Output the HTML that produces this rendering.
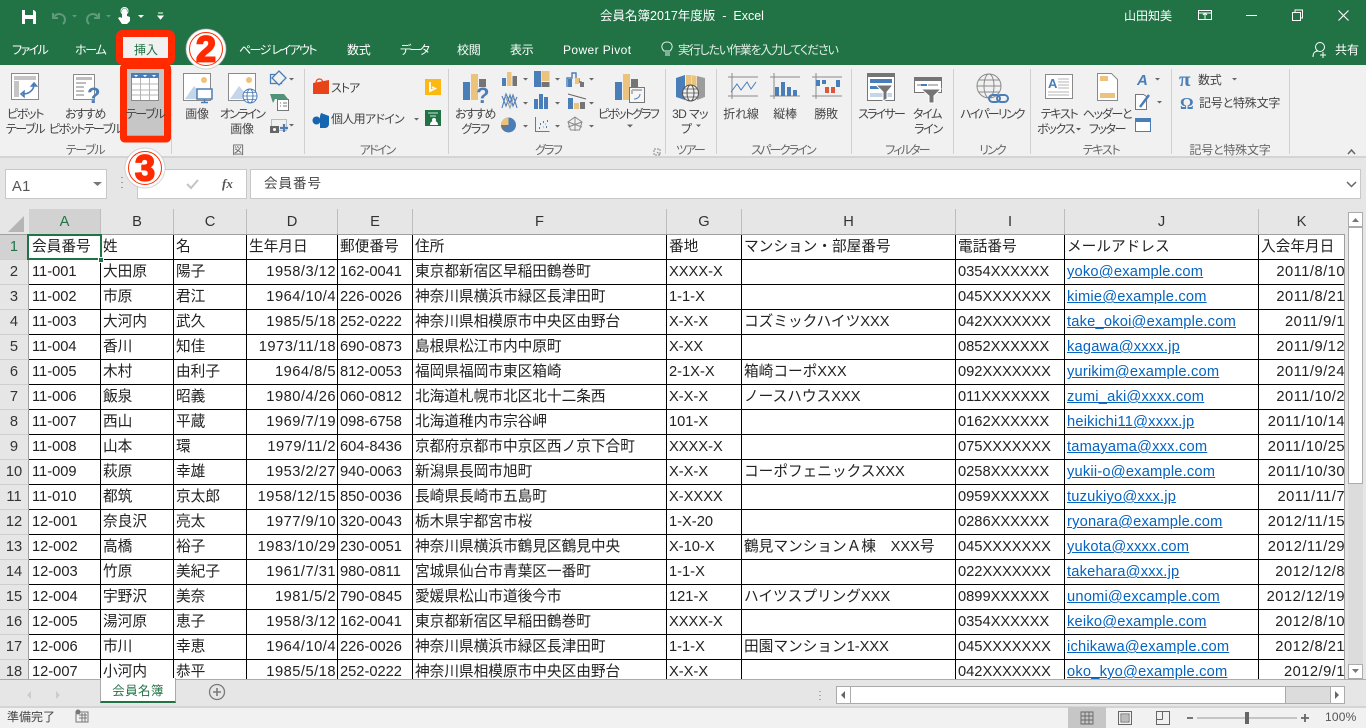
<!DOCTYPE html>
<html lang="ja"><head><meta charset="utf-8"><title>会員名簿2017年度版 - Excel</title>
<style>
*{box-sizing:border-box}
html,body{margin:0;padding:0;width:1366px;height:728px;overflow:hidden;background:#e6e6e6;font-family:"Liberation Sans","Noto Sans CJK JP",sans-serif}
.b{position:absolute}
.t{position:absolute;white-space:nowrap;font-size:12px;line-height:16px;color:#444;font-feature-settings:"palt";letter-spacing:-.2px}
.t.k{letter-spacing:-1.3px}
.t.k2{letter-spacing:-1.8px}
.c{transform:translateX(-50%);text-align:center}
.w{color:#fff}
.sep{position:absolute;top:69px;height:85px;width:1px;background:#d0d0d0}
.grp{color:#666;top:142px}
.ch{position:absolute;top:209px;height:25px;line-height:26px;text-align:center;font-size:14.67px;color:#333;border-right:1px solid #bdbdbd}
#sheet{position:absolute;left:0;top:235px;width:1344px;height:444px;overflow:hidden;background:#fff}
table{border-collapse:separate;border-spacing:0;table-layout:fixed;width:1347px}
td,th{height:25px;padding:1px 0 0 3px;border-right:1px solid #000;border-bottom:1px solid #000;font-size:14.67px;font-weight:normal;line-height:23px;overflow:hidden;white-space:nowrap;text-align:left;color:#222}
th{padding:1px 0 0 0;text-align:center;background:#e6e6e6;border-right:1px solid #9f9f9f;border-bottom:1px solid #cfcfcf;color:#333}
td.d{text-align:right;padding:1px 1px 0 0;letter-spacing:.5px}
td.m{color:#0563c1;text-decoration:underline;letter-spacing:.2px}
td.l{padding-left:2px}
tr{height:25px}
</style></head><body>
<div class="b" style="left:0;top:0;width:1366px;height:65px;background:#217346"></div>
<div class="b" style="left:0;top:65px;width:1366px;height:93px;background:#f1f1f1;border-bottom:2px solid #d4d4d4"></div>
<div class="b" style="left:5px;top:169px;width:102px;height:30px;background:#fff;border:1px solid #c8c8c8"></div>
<div class="b" style="left:137px;top:169px;width:110px;height:30px;background:#fff;border:1px solid #c8c8c8"></div>
<div class="b" style="left:250px;top:169px;width:1111px;height:30px;background:#fff;border:1px solid #c8c8c8"></div>

<div class="t w" style="left:600px;top:8px;font-size:12.5px;letter-spacing:0;font-feature-settings:normal">会員名簿2017年度版&nbsp; -&nbsp; Excel</div>
<div class="t w" style="left:1124px;top:8px;letter-spacing:0;font-feature-settings:normal">山田知美</div>
<div class="t w k" style="left:12px;top:42px;letter-spacing:-1.6px">ファイル</div>
<div class="t w k" style="left:75px;top:42px">ホーム</div>
<div class="t w k" style="left:239px;top:42px;letter-spacing:-1.6px">ページ レイアウト</div>
<div class="t w" style="left:347px;top:42px">数式</div>
<div class="t w k2" style="left:400px;top:42px">データ</div>
<div class="t w" style="left:457px;top:42px">校閲</div>
<div class="t w" style="left:510px;top:42px">表示</div>
<div class="t w" style="left:563px;top:42px;letter-spacing:.4px">Power Pivot</div>
<div class="t" style="left:678px;top:42px;color:#e4eee8;letter-spacing:-1.2px">実行したい作業を入力してください</div>
<div class="t w" style="left:1335px;top:42px;letter-spacing:0">共有</div>

<div class="t c k" style="left:25px;top:106px">ピボット</div><div class="t c k" style="left:25px;top:121px">テーブル</div>
<div class="t c k" style="left:85px;top:106px">おすすめ</div><div class="t c k" style="left:85px;top:121px;letter-spacing:-1.6px">ピボットテーブル</div>
<div class="t c" style="left:197px;top:106px">画像</div>
<div class="t c k2" style="left:242px;top:106px">オンライン</div><div class="t c" style="left:242px;top:121px">画像</div>
<div class="t" style="left:331px;top:80px;letter-spacing:-1px">ストア</div>
<div class="t" style="left:331px;top:111px;letter-spacing:-.7px">個人用アドイン</div>
<div class="t c k" style="left:475px;top:106px">おすすめ</div><div class="t c k" style="left:475px;top:121px">グラフ</div>
<div class="t c k2" style="left:628px;top:106px">ピボットグラフ</div>
<div class="t c" style="left:690px;top:106px;letter-spacing:-.6px">3D マッ</div><div class="t" style="left:681px;top:121px">プ</div>
<div class="t c" style="left:741px;top:106px">折れ線</div>
<div class="t c" style="left:785px;top:106px">縦棒</div>
<div class="t c" style="left:826px;top:106px">勝敗</div>
<div class="t c k2" style="left:881px;top:106px">スライサー</div>
<div class="t c k" style="left:927px;top:106px">タイム</div><div class="t c k" style="left:928px;top:121px">ライン</div>
<div class="t c k2" style="left:992px;top:106px">ハイパーリンク</div>
<div class="t c k" style="left:1059px;top:106px">テキスト</div><div class="t k" style="left:1037px;top:121px">ボックス</div>
<div class="t c k" style="left:1107px;top:106px">ヘッダーと</div><div class="t c k" style="left:1107px;top:121px">フッター</div>
<div class="t" style="left:1198px;top:72px">数式</div>
<div class="t" style="left:1199px;top:95px">記号と特殊文字</div>

<div class="t grp c k" style="left:85px">テーブル</div>
<div class="t grp c" style="left:238px">図</div>
<div class="t grp c k2" style="left:377px">アドイン</div>
<div class="t grp c k2" style="left:548px">グラフ</div>
<div class="t grp c k2" style="left:690px">ツアー</div>
<div class="t grp c k2" style="left:783px">スパークライン</div>
<div class="t grp c k2" style="left:907px">フィルター</div>
<div class="t grp c k2" style="left:992px">リンク</div>
<div class="t grp c k" style="left:1101px">テキスト</div>
<div class="t grp c" style="left:1230px">記号と特殊文字</div>

<div class="sep" style="left:171px"></div><div class="sep" style="left:304px"></div><div class="sep" style="left:448px"></div><div class="sep" style="left:665px"></div><div class="sep" style="left:716px"></div><div class="sep" style="left:851px"></div><div class="sep" style="left:953px"></div><div class="sep" style="left:1030px"></div><div class="sep" style="left:1171px"></div><div class="sep" style="left:1289px"></div>

<div class="t" style="left:12px;top:179px;font-size:14.67px;color:#555;letter-spacing:.3px;font-feature-settings:normal">A1</div>
<div class="t" style="left:264px;top:176px;font-size:13.5px;color:#444;letter-spacing:1px;font-feature-settings:normal">会員番号</div>
<div class="t" style="left:222px;top:176px;font:italic bold 13px/16px 'Liberation Serif',serif;color:#555;letter-spacing:0">fx</div>

<div class="ch" style="left:29px;width:72px;background:#d2d2d2;color:#217346">A</div>
<div class="ch" style="left:101px;width:73px">B</div>
<div class="ch" style="left:174px;width:73px">C</div>
<div class="ch" style="left:247px;width:91px">D</div>
<div class="ch" style="left:338px;width:75px">E</div>
<div class="ch" style="left:413px;width:254px">F</div>
<div class="ch" style="left:667px;width:75px">G</div>
<div class="ch" style="left:742px;width:214px">H</div>
<div class="ch" style="left:956px;width:109px">I</div>
<div class="ch" style="left:1065px;width:194px">J</div>
<div class="ch" style="left:1259px;width:85px;border-right:none">K</div>
<div class="b" style="left:0;top:234px;width:1345px;height:1px;background:#9f9f9f"></div>

<div id="sheet"><table><colgroup><col style="width:29px"><col style="width:72px"><col style="width:73px"><col style="width:73px"><col style="width:91px"><col style="width:75px"><col style="width:254px"><col style="width:75px"><col style="width:214px"><col style="width:109px"><col style="width:194px"><col style="width:88px"></colgroup>
<tr><th style="background:#d2d2d2;color:#217346">1</th><td>会員番号</td><td class="l">姓</td><td class="l">名</td><td class="l">生年月日</td><td class="l">郵便番号</td><td class="l">住所</td><td class="l">番地</td><td class="l">マンション・部屋番号</td><td class="l">電話番号</td><td class="l">メールアドレス</td><td class="l">入会年月日</td></tr>
<tr><th>2</th><td>11-001</td><td class="l">大田原</td><td class="l">陽子</td><td class="d">1958/3/12</td><td class="l">162-0041</td><td class="l">東京都新宿区早稲田鶴巻町</td><td class="l">XXXX-X</td><td></td><td class="l">0354XXXXXX</td><td class="l m">yoko@example.com</td><td class="d">2011/8/10</td></tr>
<tr><th>3</th><td>11-002</td><td class="l">市原</td><td class="l">君江</td><td class="d">1964/10/4</td><td class="l">226-0026</td><td class="l">神奈川県横浜市緑区長津田町</td><td class="l">1-1-X</td><td></td><td class="l">045XXXXXXX</td><td class="l m">kimie@example.com</td><td class="d">2011/8/21</td></tr>
<tr><th>4</th><td>11-003</td><td class="l">大河内</td><td class="l">武久</td><td class="d">1985/5/18</td><td class="l">252-0222</td><td class="l">神奈川県相模原市中央区由野台</td><td class="l">X-X-X</td><td class="l">コズミックハイツXXX</td><td class="l">042XXXXXXX</td><td class="l m">take_okoi@example.com</td><td class="d">2011/9/1</td></tr>
<tr><th>5</th><td>11-004</td><td class="l">香川</td><td class="l">知佳</td><td class="d">1973/11/18</td><td class="l">690-0873</td><td class="l">島根県松江市内中原町</td><td class="l">X-XX</td><td></td><td class="l">0852XXXXXX</td><td class="l m">kagawa@xxxx.jp</td><td class="d">2011/9/12</td></tr>
<tr><th>6</th><td>11-005</td><td class="l">木村</td><td class="l">由利子</td><td class="d">1964/8/5</td><td class="l">812-0053</td><td class="l">福岡県福岡市東区箱崎</td><td class="l">2-1X-X</td><td class="l">箱崎コーポXXX</td><td class="l">092XXXXXXX</td><td class="l m">yurikim@example.com</td><td class="d">2011/9/24</td></tr>
<tr><th>7</th><td>11-006</td><td class="l">飯泉</td><td class="l">昭義</td><td class="d">1980/4/26</td><td class="l">060-0812</td><td class="l">北海道札幌市北区北十二条西</td><td class="l">X-X-X</td><td class="l">ノースハウスXXX</td><td class="l">011XXXXXXX</td><td class="l m">zumi_aki@xxxx.com</td><td class="d">2011/10/2</td></tr>
<tr><th>8</th><td>11-007</td><td class="l">西山</td><td class="l">平蔵</td><td class="d">1969/7/19</td><td class="l">098-6758</td><td class="l">北海道稚内市宗谷岬</td><td class="l">101-X</td><td></td><td class="l">0162XXXXXX</td><td class="l m">heikichi11@xxxx.jp</td><td class="d">2011/10/14</td></tr>
<tr><th>9</th><td>11-008</td><td class="l">山本</td><td class="l">環</td><td class="d">1979/11/2</td><td class="l">604-8436</td><td class="l">京都府京都市中京区西ノ京下合町</td><td class="l">XXXX-X</td><td></td><td class="l">075XXXXXXX</td><td class="l m">tamayama@xxx.com</td><td class="d">2011/10/25</td></tr>
<tr><th>10</th><td>11-009</td><td class="l">萩原</td><td class="l">幸雄</td><td class="d">1953/2/27</td><td class="l">940-0063</td><td class="l">新潟県長岡市旭町</td><td class="l">X-X-X</td><td class="l">コーポフェニックスXXX</td><td class="l">0258XXXXXX</td><td class="l m">yukii-o@example.com</td><td class="d">2011/10/30</td></tr>
<tr><th>11</th><td>11-010</td><td class="l">都筑</td><td class="l">京太郎</td><td class="d">1958/12/15</td><td class="l">850-0036</td><td class="l">長崎県長崎市五島町</td><td class="l">X-XXXX</td><td></td><td class="l">0959XXXXXX</td><td class="l m">tuzukiyo@xxx.jp</td><td class="d">2011/11/7</td></tr>
<tr><th>12</th><td>12-001</td><td class="l">奈良沢</td><td class="l">亮太</td><td class="d">1977/9/10</td><td class="l">320-0043</td><td class="l">栃木県宇都宮市桜</td><td class="l">1-X-20</td><td></td><td class="l">0286XXXXXX</td><td class="l m">ryonara@example.com</td><td class="d">2012/11/15</td></tr>
<tr><th>13</th><td>12-002</td><td class="l">高橋</td><td class="l">裕子</td><td class="d">1983/10/29</td><td class="l">230-0051</td><td class="l">神奈川県横浜市鶴見区鶴見中央</td><td class="l">X-10-X</td><td class="l">鶴見マンションＡ棟　XXX号</td><td class="l">045XXXXXXX</td><td class="l m">yukota@xxxx.com</td><td class="d">2012/11/29</td></tr>
<tr><th>14</th><td>12-003</td><td class="l">竹原</td><td class="l">美紀子</td><td class="d">1961/7/31</td><td class="l">980-0811</td><td class="l">宮城県仙台市青葉区一番町</td><td class="l">1-1-X</td><td></td><td class="l">022XXXXXXX</td><td class="l m">takehara@xxx.jp</td><td class="d">2012/12/8</td></tr>
<tr><th>15</th><td>12-004</td><td class="l">宇野沢</td><td class="l">美奈</td><td class="d">1981/5/2</td><td class="l">790-0845</td><td class="l">愛媛県松山市道後今市</td><td class="l">121-X</td><td class="l">ハイツスプリングXXX</td><td class="l">0899XXXXXX</td><td class="l m">unomi@excample.com</td><td class="d">2012/12/19</td></tr>
<tr><th>16</th><td>12-005</td><td class="l">湯河原</td><td class="l">恵子</td><td class="d">1958/3/12</td><td class="l">162-0041</td><td class="l">東京都新宿区早稲田鶴巻町</td><td class="l">XXXX-X</td><td></td><td class="l">0354XXXXXX</td><td class="l m">keiko@example.com</td><td class="d">2012/8/10</td></tr>
<tr><th>17</th><td>12-006</td><td class="l">市川</td><td class="l">幸恵</td><td class="d">1964/10/4</td><td class="l">226-0026</td><td class="l">神奈川県横浜市緑区長津田町</td><td class="l">1-1-X</td><td class="l">田園マンション1-XXX</td><td class="l">045XXXXXXX</td><td class="l m">ichikawa@example.com</td><td class="d">2012/8/21</td></tr>
<tr><th>18</th><td>12-007</td><td class="l">小河内</td><td class="l">恭平</td><td class="d">1985/5/18</td><td class="l">252-0222</td><td class="l">神奈川県相模原市中央区由野台</td><td class="l">X-X-X</td><td></td><td class="l">042XXXXXXX</td><td class="l m">oko_kyo@example.com</td><td class="d">2012/9/1</td></tr>
</table></div>
<div class="b" style="left:1344px;top:234px;width:1px;height:445px;background:#9f9f9f"></div>
<div class="b" style="left:27px;top:234px;width:75px;height:26px;border:2px solid #217346"></div>
<div class="b" style="left:98px;top:257px;width:6px;height:6px;background:#217346;border:1px solid #fff"></div>

<!-- v scrollbar -->
<div class="b" style="left:1348px;top:212px;width:15px;height:467px;background:#dcdcdc"></div>
<div class="b" style="left:1348px;top:212px;width:15px;height:15px;background:#fff;border:1px solid #ababab"></div>
<div class="b" style="left:1348px;top:227px;width:15px;height:257px;background:#fff;border:1px solid #ababab"></div>
<div class="b" style="left:1348px;top:664px;width:15px;height:15px;background:#fff;border:1px solid #ababab"></div>

<!-- bottom -->
<div class="b" style="left:0;top:679px;width:1366px;height:1px;background:#ababab"></div>
<div class="b" style="left:100px;top:678px;width:76px;height:25px;background:#fff;border-left:1px solid #ababab;border-right:1px solid #ababab;border-bottom:2px solid #217346"></div>
<div class="t c" style="left:138px;top:683px;font-size:12.5px;color:#217346;letter-spacing:.4px;font-feature-settings:normal">会員名簿</div>
<div class="b" style="left:836px;top:686px;width:509px;height:18px;background:#dcdcdc;border:1px solid #ababab"></div>
<div class="b" style="left:851px;top:687px;width:435px;height:16px;background:#fff"></div>
<div class="b" style="left:850px;top:687px;width:1px;height:16px;background:#ababab"></div>
<div class="b" style="left:1285px;top:687px;width:1px;height:16px;background:#ababab"></div>
<div class="b" style="left:1330px;top:687px;width:14px;height:16px;background:#fff;border-left:1px solid #ababab"></div>
<div class="b" style="left:837px;top:687px;width:13px;height:16px;background:#fff"></div>
<div class="b" style="left:0;top:706px;width:1366px;height:22px;background:#f1f1f1;border-top:2px solid #d4d4d4"></div>
<div class="b" style="left:1068px;top:707px;width:38px;height:21px;background:#c6c6c6"></div>
<div class="t" style="left:7px;top:709px;color:#444;letter-spacing:0;font-feature-settings:normal">準備完了</div>
<div class="t" style="left:1325px;top:709px;color:#555;letter-spacing:.2px;font-feature-settings:normal">100%</div>

<svg class="b" style="left:0;top:0" width="1366" height="728" viewBox="0 0 1366 728" fill="none">
<!-- QAT -->
<path d="M22 10h12l2 2v12H22z" fill="#fff"/><rect x="25" y="10" width="8" height="5" fill="#217346"/><rect x="25" y="19" width="8" height="5" fill="#217346"/>
<path d="M53 13v5h5M53 18c3-6 12-5 12 2c0 2-1 3-2 4" stroke="#5f9a7c" stroke-width="2"/><path d="M72 15l2.500 2.500 2.500-2.500z" fill="#5f9a7c"/>
<path d="M99 13v5h-5M99 18c-3-6-12-5-12 2c0 2 1 3 2 4" stroke="#5f9a7c" stroke-width="2"/><path d="M106 15l2.500 2.500 2.500-2.500z" fill="#5f9a7c"/>
<path d="M122 18V11a2.500 2.500 0 0 1 5 0v5l3 1v4l-3 3h-5l-4-6 2-1z" fill="#fff"/><circle cx="124.500" cy="11" r="3.500" stroke="#fff"/>
<path d="M138 15l3 3 3-3z" fill="#fff"/><path d="M158 13h5M158 16l2.500 3 2.500-3z" stroke="#fff" fill="#fff"/>
<!-- window controls -->
<rect x="1198.500" y="10.500" width="13" height="9" stroke="#fff"/><path d="M1198 13h14M1205 19v-5M1203 15l2-2 2 2" stroke="#fff"/>
<path d="M1246 15.500h11" stroke="#fff"/>
<rect x="1292.500" y="12.500" width="8" height="8" stroke="#fff"/><path d="M1295 12v-2h7.500v8h-2" stroke="#fff"/>
<path d="M1338.500 10.500l10 10M1348.500 10.500l-10 10" stroke="#fff" stroke-width="1.100"/>
<circle cx="1320" cy="47" r="4.500" stroke="#fff"/><path d="M1313 57c0-5 3-6 5-6M1323 52v6M1320 55h6" stroke="#fff"/>
<g transform="translate(-5 0)"><path d="M670 53h5M670 55h5" stroke="#e4eee8"/><path d="M669 51c-4-4-2-9 3-9s7 5 3 9z" stroke="#e4eee8"/></g>
<!-- pivot table -->
<rect x="11.500" y="73.500" width="27" height="26" fill="#fff" stroke="#8a8a8a"/><rect x="14" y="76" width="22" height="4" fill="#c4c4c4"/><rect x="14" y="81" width="5" height="16" fill="#c4c4c4"/>
<path d="M23 94c5 0 11-3 11-10M21 94l3-2.500v5zM34 83l-2.500 3h5z" stroke="#4a7eb8" stroke-width="1.600" fill="none"/>
<!-- rec pivot -->
<rect x="73.500" y="74.500" width="21" height="25" fill="#fff" stroke="#8a8a8a"/><rect x="76" y="77" width="16" height="3" fill="#bdbdbd"/><path d="M76 83h10M76 87h8M76 91h8M76 95h8" stroke="#bdbdbd" stroke-width="2"/>
<text x="87" y="103" font-size="22" font-weight="bold" fill="#4a7eb8" font-family="Liberation Sans">?</text>
<!-- picture -->
<rect x="183.500" y="73.500" width="27" height="27" fill="#fff" stroke="#8a8a8a"/><path d="M185 99l9-13 6 7 4 6z" fill="#c5d6ea"/><circle cx="204" cy="80" r="3" fill="#ecc37c"/>
<rect x="197" y="89" width="15" height="10" fill="#fff" stroke="#4a7eb8" stroke-width="1.500"/><path d="M204.500 99v3M201 102.500h7" stroke="#4a7eb8" stroke-width="1.400"/>
<rect x="228.500" y="73.500" width="27" height="27" fill="#fff" stroke="#8a8a8a"/><path d="M230 99l9-13 6 7 4 6z" fill="#c5d6ea"/><circle cx="249" cy="80" r="3" fill="#ecc37c"/>
<circle cx="250" cy="96" r="7" fill="#fff" stroke="#4a7eb8"/><ellipse cx="250" cy="96" rx="3" ry="7" stroke="#4a7eb8"/><path d="M243 96h14M244 92.500h12M244 99.500h12" stroke="#4a7eb8" stroke-width=".8"/>
<!-- shapes, icons, screenshot -->
<rect x="270.500" y="74.500" width="11" height="9" stroke="#4a7eb8" stroke-width="1.300"/><path d="M279 71l7 7-7 7-7-7z" fill="#f1f1f1" stroke="#4a7eb8" stroke-width="1.300"/><path d="M289 78l2.500 2.500 2.500-2.500z" fill="#666"/>
<path d="M270 94h14l4 5h-13l-2 4z" fill="#4f9478"/><rect x="277.500" y="99.500" width="11" height="11" fill="#fff" stroke="#777"/><path d="M280 103h1M280 106h1M283 103h4M283 106h4" stroke="#777"/>
<rect x="271.500" y="119.500" width="15" height="11" stroke="#888" stroke-dasharray="1 1"/><rect x="270" y="126" width="9" height="7" fill="#666"/><circle cx="274.500" cy="129.500" r="1.500" fill="#fff"/><path d="M284 124v8M280 128h8" stroke="#4a7eb8" stroke-width="2.200"/><path d="M289 124l2.500 2.500 2.500-2.500z" fill="#666"/>
<!-- store/addins -->
<path d="M313 83l16-3v14h-16z" fill="#e8441a"/><path d="M316 83c0-3 2-4 3.500-4s3 1 3 3" stroke="#e8441a" stroke-width="1.200"/>
<path d="M321 113l8 3v8a4 4 0 0 1-4 4h-5v-12z" fill="#1565b0"/><circle cx="316.500" cy="120.500" r="4" fill="#1565b0"/>
<rect x="425" y="79" width="16" height="16" fill="#fdb813"/><path d="M430 82v9l5-2.500-3-1.500" stroke="#fff" stroke-width="1.800"/>
<path d="M414 118l2.500 2.500 2.500-2.500z" fill="#666"/>
<rect x="425" y="110" width="16" height="16" fill="#217346"/><path d="M428 113h10M430 116h6" stroke="#cde3d7"/><circle cx="434" cy="120" r="2" fill="#fff"/><path d="M430 125c0-3 2-4 4-4s4 1 4 4z" fill="#fff"/>
<!-- charts -->
<rect x="463" y="82" width="7" height="18" fill="#4a7eb8"/><rect x="471" y="74" width="7" height="26" fill="#ecc37c"/><rect x="479" y="79" width="7" height="8" fill="#757575"/>
<text x="476" y="103" font-size="22" font-weight="bold" fill="#4a7eb8" font-family="Liberation Sans">?</text>
<rect x="502" y="78" width="4" height="8" fill="#4a7eb8"/><rect x="507" y="72" width="4.500" height="14" fill="#ecc37c"/><rect x="512.500" y="76" width="4.500" height="10" fill="#757575"/>
<rect x="534" y="71" width="7" height="16" fill="#4a7eb8"/><rect x="541.500" y="71" width="8" height="10" fill="#ecc37c"/><rect x="541.500" y="82" width="8" height="5" fill="#757575"/>
<path d="M567 87v-9h5v-5h4v6h3v3h2v5" stroke="#4a7eb8" stroke-width="1.400"/><rect x="568" y="79" width="4" height="8" fill="#4a7eb8"/><rect x="575" y="78" width="4" height="6" fill="#ecc37c"/><rect x="580" y="82" width="4" height="5" fill="#757575"/>
<path d="M502 96l4 10 4-11 3 11 4-9M502 108l4-14 4 9 3-8 4 13" stroke="#4a7eb8" stroke-width="1.100"/><path d="M505 95l5 13 4-12" stroke="#999"/>
<rect x="534" y="99" width="4" height="10" fill="#4a7eb8"/><rect x="539" y="94" width="4" height="15" fill="#4a7eb8"/><rect x="544" y="97" width="4" height="12" fill="#4a7eb8"/>
<rect x="568" y="98" width="5" height="11" fill="#4a7eb8"/><rect x="574" y="103" width="5" height="6" fill="#ecc37c"/><rect x="580" y="102" width="5" height="7" fill="#757575"/><path d="M568 94l18 5" stroke="#666"/>
<circle cx="508.500" cy="125" r="7.500" fill="#4a7eb8"/><path d="M508.500 125v-7.500a7.500 7.500 0 0 0-7.500 7.500z" fill="#ecc37c"/><path d="M508.500 125h-7.500a7.500 7.500 0 0 0 2 5z" fill="#757575"/>
<path d="M535.500 117v14.500h14" stroke="#777"/><path d="M539 128h1M543 122h1M546 127h1M540 124h1M547 121h1" stroke="#4a7eb8" stroke-width="2"/><path d="M543 127h1M545 124h1" stroke="#ecc37c" stroke-width="2"/>
<path d="M575 117l7 5-2.500 8h-9l-2.500-8zM575 117v14M568 122l14 5M582 122l-14 5" stroke="#8a8a8a"/>
<path d="M523 78l2.500 2.500 2.500-2.500zM523 102l2.500 2.500 2.500-2.500zM523 125l2.500 2.500 2.500-2.500zM555 78l2.500 2.500 2.500-2.500zM555 102l2.500 2.500 2.500-2.500zM555 125l2.500 2.500 2.500-2.500zM589 78l2.500 2.500 2.500-2.500zM589 102l2.500 2.500 2.500-2.500zM589 125l2.500 2.500 2.500-2.500z" fill="#666"/>
<!-- pivot chart -->
<rect x="615" y="82" width="7" height="18" fill="#4a7eb8"/><rect x="623" y="74" width="7" height="26" fill="#ecc37c"/><rect x="631" y="79" width="7" height="8" fill="#757575"/>
<rect x="629.500" y="87.500" width="15" height="15" fill="#f6f6f6" stroke="#777"/><path d="M632 90h10M632 90v4" stroke="#b5b5b5" stroke-width="2"/><path d="M634 99c3 0 6-2 6-5" stroke="#4a7eb8"/>
<path d="M627 124.500l3 3 3-3zM696 124.500l2.500 2.500 2.500-2.500z" fill="#666"/>
<path d="M654 149h6v6h-6zM657 152l3 3" stroke="#888" stroke-dasharray="2 1"/>
<!-- 3D map -->
<path d="M676 78l9-3v25l-9-3z" fill="#4a7eb8"/><path d="M686 75h5v25h-5z" fill="#ecc37c"/><path d="M691.500 75l5 1v22l-5 2z" fill="#ecc37c"/><path d="M697 76l8 2v19l-8 3z" fill="#9d9d9d"/>
<circle cx="690.500" cy="93" r="8" fill="#f1f1f1" stroke="#555"/><ellipse cx="690.500" cy="93" rx="3.500" ry="8" stroke="#555"/><path d="M682.500 93h16M684 89h13M684 97h13" stroke="#555" stroke-width=".8"/>
<!-- sparklines -->
<path d="M728 77h30M728 96h30M732 73v26" stroke="#8a8a8a"/><path d="M731 92l6-8 4 6 6-8 4 7 5-7" stroke="#4a7eb8"/>
<path d="M770 77h30M770 96h30M774 73v26" stroke="#8a8a8a"/><rect x="775" y="87" width="4" height="9" fill="#4a7eb8"/><rect x="781" y="82" width="4" height="14" fill="#4a7eb8"/><rect x="787" y="87" width="4" height="9" fill="#4a7eb8"/><rect x="793" y="90" width="4" height="6" fill="#4a7eb8"/>
<path d="M812 77h30M812 96h30M816 73v26" stroke="#8a8a8a"/><rect x="816" y="80" width="4" height="6" fill="#4a7eb8"/><rect x="822" y="80" width="4" height="4" fill="#4a7eb8"/><rect x="836" y="80" width="4" height="7" fill="#4a7eb8"/><rect x="825" y="87" width="4" height="6" fill="#d9573a"/><rect x="831" y="87" width="4" height="6" fill="#d9573a"/>
<!-- slicer -->
<rect x="867.500" y="73.500" width="27" height="27" fill="#fff" stroke="#757575"/><rect x="867" y="73" width="28" height="4" fill="#757575"/><rect x="870" y="79" width="22" height="4" fill="#4a7eb8"/><rect x="870" y="86" width="10" height="3" fill="#4a7eb8"/><rect x="870" y="93" width="22" height="4" fill="#c5d6ea"/><path d="M876 85h17l-6 7v7l-4 2v-9z" fill="#757575" stroke="#fff"/>
<rect x="914.500" y="77.500" width="27" height="15" fill="#fff" stroke="#757575"/><rect x="914" y="77" width="28" height="4" fill="#757575"/><path d="M917 85h5" stroke="#bdbdbd" stroke-width="2"/><path d="M921 85h6" stroke="#4a7eb8" stroke-width="2"/><path d="M928 85h10" stroke="#bdbdbd" stroke-width="2"/><path d="M921 89h20l-7 7v7l-5 0v-7z" fill="#757575" stroke="#fff"/>
<!-- hyperlink -->
<circle cx="989" cy="86" r="12" stroke="#8a8a8a"/><ellipse cx="989" cy="86" rx="5" ry="12" stroke="#8a8a8a"/><path d="M977 86h24M979 80h20M979 92h20" stroke="#8a8a8a"/>
<rect x="989" y="95" width="11" height="7" rx="3.500" stroke="#4a7eb8" stroke-width="2"/><rect x="997" y="95" width="11" height="7" rx="3.500" stroke="#4a7eb8" stroke-width="2"/>
<!-- text box etc -->
<rect x="1045.500" y="74.500" width="27" height="24" fill="#fff" stroke="#8a8a8a"/><text x="1048" y="88" font-size="13" font-weight="bold" fill="#4a7eb8" font-family="Liberation Sans">A</text><path d="M1058 79h11M1058 82h11M1058 85h11M1058 88h11M1048 92h21M1048 95h21" stroke="#9d9d9d" stroke-width=".8"/>
<path d="M1097.500 73.500h14l6 6v21h-20z" fill="#fff" stroke="#8a8a8a"/><rect x="1100" y="76" width="8" height="5" fill="#ecc37c"/><rect x="1100" y="93" width="15" height="5" fill="#ecc37c"/>
<text x="1137" y="85" font-size="15" font-weight="bold" font-style="italic" fill="#4a7eb8" font-family="Liberation Sans">A</text><path d="M1155 78l2.500 2.500 2.500-2.500z" fill="#666"/>
<path d="M1135.500 94.500h8l3 2v13h-11z" fill="#fff" stroke="#777"/><path d="M1140 107l9-12" stroke="#4a7eb8" stroke-width="2.500"/><path d="M1157 101l2.500 2.500 2.500-2.500z" fill="#666"/>
<rect x="1135.500" y="118.500" width="15" height="13" fill="#fff" stroke="#4a7eb8"/><rect x="1135" y="118" width="16" height="4" fill="#4a7eb8"/>
<path d="M1076 128l2.500 2.500 2.500-2.500z" fill="#555"/>
<text x="1179" y="86" font-size="21" font-weight="bold" fill="#4a7eb8" font-family="Liberation Serif">π</text><path d="M1232 78l2.500 2.500 2.500-2.500z" fill="#666"/>
<text x="1180" y="109" font-size="17" font-weight="bold" fill="#4a7eb8" font-family="Liberation Serif">Ω</text>
<path d="M1348 154l3.500-4 3.500 4" stroke="#666" stroke-width="1.500"/>
<!-- formula bar -->
<path d="M93 182h9l-4.500 4z" fill="#777"/>
<path d="M122 177v1M122 182v1M122 187v1" stroke="#a0a0a0" stroke-width="2"/>
<path d="M187 184l4 4 7-8" stroke="#c4c4c4" stroke-width="2"/>
<path d="M1347 182l4.500 4.500 4.500-4.500" stroke="#666" stroke-width="1.500"/>
<path d="M24 216L8 232h16z" fill="#b5b5b5"/>
<!-- scrollbars -->
<path d="M1352 222l3.500-4 3.500 4z" fill="#777"/><path d="M1352 669l3.500 4 3.500-4z" fill="#777"/>
<path d="M845 691l-4 4 4 4z" fill="#666"/><path d="M1335 691l4 4-4 4z" fill="#666"/>
<path d="M31 691l-4 4 4 4z" fill="#ccc"/><path d="M56 691l4 4-4 4z" fill="#ccc"/>
<circle cx="217" cy="692" r="7.500" stroke="#7a7a7a" stroke-width="1.300"/><path d="M217 688v8M213 692h8" stroke="#7a7a7a" stroke-width="1.600"/>
<path d="M820 691v1M820 695v1M820 699v1" stroke="#aaa" stroke-width="2"/>
<!-- status icons -->
<rect x="76" y="712" width="12" height="10" fill="#f1f1f1" stroke="#777"/><circle cx="78" cy="712" r="2.500" fill="#777"/><path d="M79 715h8M79 718h8M82 713v9M85 713v9" stroke="#777"/>
<path d="M1081 712h12v12h-12zM1085 712v12M1089 712v12M1081 716h12M1081 720h12" stroke="#666" stroke-width=".9"/>
<rect x="1118.500" y="711.500" width="13" height="13" stroke="#666"/><rect x="1121" y="714" width="8" height="8" stroke="#666"/><path d="M1122 716h6M1122 718h6M1122 720h6" stroke="#666" stroke-width=".7"/>
<path d="M1156.500 711.500h13v13h-13zM1156.500 719.500h6M1162.500 711.500v8" stroke="#666"/>
<path d="M1187 718h6M1301 718h8M1305 714v8" stroke="#666" stroke-width="1.800"/>
<path d="M1197 718h100" stroke="#999"/><rect x="1245" y="712" width="4" height="12" fill="#666"/>

<!-- red highlights -->
<rect x="119.500" y="33.500" width="52" height="28" rx="3" fill="#f1f1f1" stroke="#ff2a00" stroke-width="7"/>
<rect x="123.500" y="67" width="44" height="72" rx="1" stroke="#ff2a00" stroke-width="7"/>
<rect x="127" y="69" width="37" height="66" fill="#c6c6c6"/>
<path d="M131.500 73.500h27v27h-27z" fill="#fff" stroke="#8a8a8a"/><rect x="131" y="73" width="28" height="5" fill="#4a7eb8"/><path d="M132 84h26M132 90h26M132 95h26M140.500 78v22M149.500 78v22" stroke="#b5b5b5"/><path d="M134 75h4l-2 2zM143 75h4l-2 2zM152 75h4l-2 2z" fill="#fff"/>
<circle cx="206" cy="49" r="20" fill="#fff" stroke="#bbb" stroke-opacity=".6"/>
<circle cx="206" cy="49" r="16.500" stroke="#ff2a00" stroke-width="1"/>
<text x="206" y="61.500" text-anchor="middle" font-size="36" font-weight="bold" fill="#ff2a00" stroke="#ff2a00" stroke-width="1.800" font-family="Liberation Sans">2</text>
<circle cx="145" cy="168" r="20" fill="#fff" stroke="#bbb" stroke-opacity=".6"/>
<circle cx="145" cy="168" r="16.500" stroke="#ff2a00" stroke-width="1"/>
<text x="145" y="180.500" text-anchor="middle" font-size="36" font-weight="bold" fill="#ff2a00" stroke="#ff2a00" stroke-width="1.800" font-family="Liberation Sans">3</text>
</svg>
<div class="t c" style="left:146px;top:42px;color:#217346;letter-spacing:0;z-index:2;font-feature-settings:normal">挿入</div>
<div class="t c k" style="left:145px;top:106px;z-index:2">テーブル</div>
</body></html>
